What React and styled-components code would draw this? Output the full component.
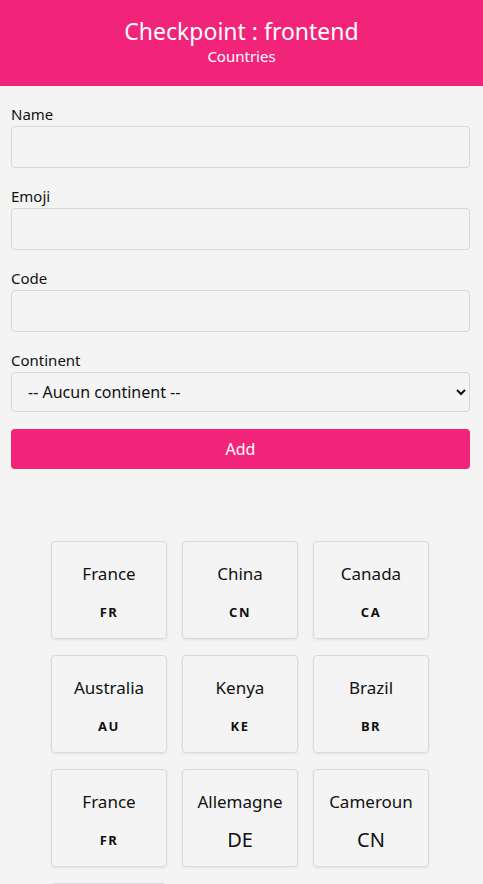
import styled, { createGlobalStyle } from "styled-components";

const GlobalStyle = createGlobalStyle`
  body {
    margin: 0;
    background-color: #f4f4f4;
    font-family: "Noto Sans", "Open Sans", sans-serif;
    color: #111;
  }
`;

const Header = styled.header`
  background-color: #f2247a;
  color: #fff;
  text-align: center;
  height: 86px;
  box-sizing: border-box;
  padding-top: 16px;
`;

const Title = styled.h1`
  margin: 0;
  font-size: 23px;
  font-weight: 400;
  line-height: 30px;
`;

const SubTitle = styled.p`
  margin: 0;
  font-size: 15px;
  line-height: 20px;
`;

const Form = styled.form`
  padding: 18px 13px 0 11px;
`;

const Field = styled.div`
  display: flex;
  flex-direction: column;
  gap: 2px;
  margin-bottom: 18px;
`;

const Label = styled.label`
  font-size: 15px;
  line-height: 20px;
`;

const Input = styled.input`
  height: 42px;
  box-sizing: border-box;
  border: 1px solid #d4d7dd;
  border-radius: 4px;
  background-color: #f4f4f4;
  font-family: inherit;
  font-size: 15px;
  padding: 0 10px;
`;

const Select = styled.select`
  height: 40px;
  box-sizing: border-box;
  border: 1px solid #d4d7dd;
  border-radius: 4px;
  background-color: #f4f4f4;
  font-family: inherit;
  font-size: 16px;
  color: #111;
  padding: 0 8px 0 12px;
`;

const Button = styled.button`
  width: 100%;
  height: 40px;
  margin-top: -1px;
  border: none;
  border-radius: 4px;
  background-color: #f2247a;
  color: #fff;
  font-family: inherit;
  font-size: 16px;
`;

const Grid = styled.ul`
  list-style: none;
  margin: 72px 0 0;
  padding: 0 3px 0 0;
  display: grid;
  grid-template-columns: repeat(3, 116px);
  gap: 16px 15px;
  justify-content: center;
`;

const Card = styled.li`
  display: flex;
  flex-direction: column;
  align-items: center;
  gap: 14px;
  height: 98px;
  box-sizing: border-box;
  padding: 20px 4px 16px;
  border: 1px solid #d8dae0;
  border-radius: 4px;
  box-shadow: 0 1px 3px rgba(0, 0, 0, 0.08);
`;

const Name = styled.span`
  font-size: 17px;
  line-height: 24px;
`;

const Code = styled.span`
  font-size: ${(p) => (p.$flag ? "13px" : "20px")};
  font-weight: ${(p) => (p.$flag ? 700 : 400)};
  letter-spacing: ${(p) => (p.$flag ? "1.5px" : "0")};
  line-height: 24px;
`;

const countries = [
  { name: "France", code: "FR", flag: true },
  { name: "China", code: "CN", flag: true },
  { name: "Canada", code: "CA", flag: true },
  { name: "Australia", code: "AU", flag: true },
  { name: "Kenya", code: "KE", flag: true },
  { name: "Brazil", code: "BR", flag: true },
  { name: "France", code: "FR", flag: true },
  { name: "Allemagne", code: "DE", flag: false },
  { name: "Cameroun", code: "CN", flag: false },
  { name: "Italie", code: "IT", flag: true },
];

export default function App() {
  return (
    <>
      <GlobalStyle />
      <Header>
        <Title>Checkpoint : frontend</Title>
        <SubTitle>Countries</SubTitle>
      </Header>
      <Form onSubmit={(e) => e.preventDefault()}>
        <Field>
          <Label>Name</Label>
          <Input />
        </Field>
        <Field>
          <Label>Emoji</Label>
          <Input />
        </Field>
        <Field>
          <Label>Code</Label>
          <Input />
        </Field>
        <Field>
          <Label>Continent</Label>
          <Select defaultValue="">
            <option value="">-- Aucun continent --</option>
          </Select>
        </Field>
        <Button type="submit">Add</Button>
      </Form>
      <Grid>
        {countries.map((c, i) => (
          <Card key={i}>
            <Name>{c.name}</Name>
            <Code $flag={c.flag}>{c.code}</Code>
          </Card>
        ))}
      </Grid>
    </>
  );
}
